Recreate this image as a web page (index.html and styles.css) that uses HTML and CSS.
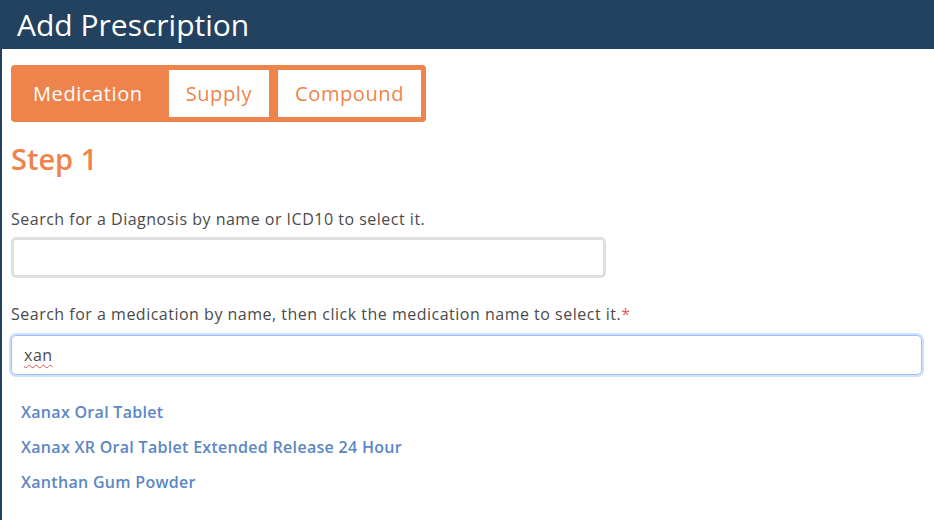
FILE: index.html
```html
<!DOCTYPE html>
<html lang="en">
<head>
    <meta charset="UTF-8">
    <meta name="viewport" content="width=device-width, initial-scale=1.0">
    <title>Add Prescription</title>
    <link rel="stylesheet" href="styles.css">
</head>
<body>
    <div class="page">
        <div class="header">
            <h1>Add Prescription</h1>
        </div>

        <div class="content">
            <div class="tabs">
                <div class="tab active">Medication</div>
                <div class="tab">Supply</div>
                <div class="tab">Compound</div>
            </div>

            <h2 class="step">Step 1</h2>

            <label class="label">Search for a Diagnosis by name or ICD10 to select it.</label>
            <div class="field diagnosis"></div>

            <label class="label">Search for a medication by name, then click the medication name to select it.<span class="required">*</span></label>
            <div class="field focused"><span class="typed">xan</span></div>

            <ul class="results">
                <li><a href="#">Xanax Oral Tablet</a></li>
                <li><a href="#">Xanax XR Oral Tablet Extended Release 24 Hour</a></li>
                <li><a href="#">Xanthan Gum Powder</a></li>
            </ul>
        </div>
    </div>
</body>
</html>
```

FILE: styles.css
```css
html, body {
    margin: 0;
    height: 100%;
}
body {
    font-family: "Open Sans", Arial, sans-serif;
    background-color: #fff;
    color: #4a4a4a;
}
.page {
    min-height: 100%;
    border-left: 2px solid #22425f;
    box-sizing: border-box;
}
.header {
    background-color: #22425f;
    height: 49px;
    padding: 0 15px;
    display: flex;
    align-items: center;
}
.header h1 {
    margin: 0;
    color: #fff;
    font-size: 30px;
    font-weight: 400;
    letter-spacing: 0;
}
.content {
    padding: 16px 12px 0 9px;
}
.tabs {
    display: inline-flex;
    gap: 9px;
    padding: 5px;
    background-color: #ee844b;
    border-radius: 4px;
}
.tab {
    height: 47px;
    padding: 0 17px;
    display: flex;
    align-items: center;
    font-size: 20px;
    letter-spacing: 0.6px;
    color: #ee844b;
    background-color: #fff;
}
.tab.active {
    color: #fff;
    background-color: #ee844b;
}
.step {
    margin: 20px 0 0;
    font-size: 29px;
    font-weight: 600;
    color: #ee844b;
    line-height: 34px;
}
.label {
    display: block;
    font-size: 16px;
    letter-spacing: 0.5px;
    margin-top: 26px;
    line-height: 20px;
}
.step + .label {
    margin-top: 33px;
}
.required {
    color: #e05a5a;
}
.field {
    height: 41px;
    margin-top: 8px;
    border: 3px solid #dedfe1;
    border-radius: 5px;
    box-sizing: border-box;
    padding: 0 10px;
    display: flex;
    align-items: center;
    font-size: 16px;
    letter-spacing: 0.5px;
}
.field.diagnosis {
    width: 595px;
}
.field.focused {
    height: 40px;
    border: 1px solid #9cc0f0;
    box-shadow: 0 0 0 2px #cfe1fb;
    margin-top: 11px;
    padding: 0 12px;
}
.typed {
    text-decoration: underline wavy #d9534f;
    text-decoration-thickness: 1px;
    text-underline-offset: 3px;
}
.results {
    list-style: none;
    margin: 26px 0 0;
    padding: 0 0 0 10px;
}
.results li {
    height: 35px;
}
.results a {
    color: #5b86c5;
    font-weight: 600;
    font-size: 16px;
    letter-spacing: 0.3px;
    text-decoration: none;
}
```
